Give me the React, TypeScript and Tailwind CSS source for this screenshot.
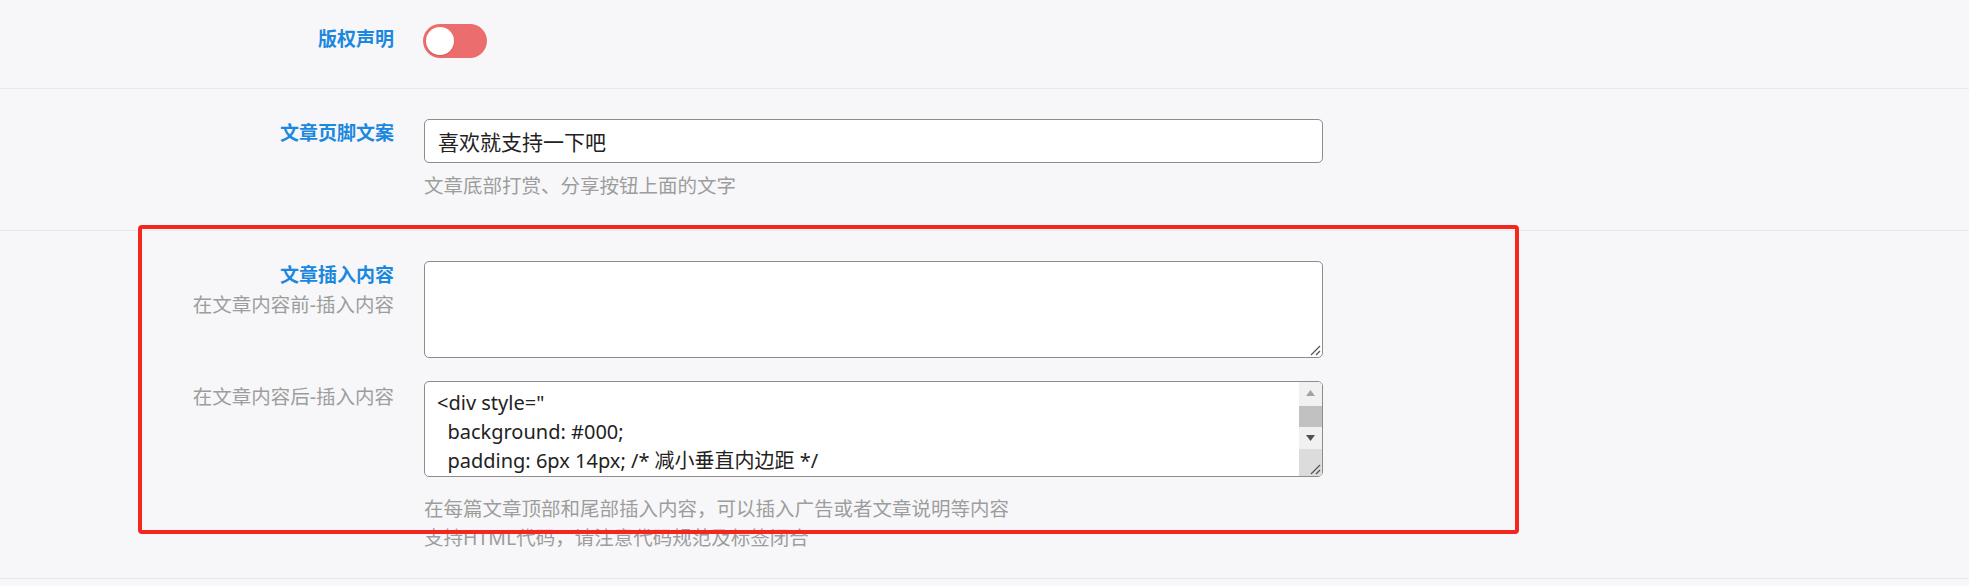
import React, { useState } from 'react';

const font = "font-['Noto_Sans','Noto_Sans_CJK_SC',sans-serif]";

const codeText = `<div style="
  background: #000;
  padding: 6px 14px; /* 减小垂直内边距 */
  border-radius: 6px;
  color: #fff;
">`;

function Grip() {
    return (
        <svg width="12" height="12" viewBox="0 0 12 12" className="block">
            <line x1="11" y1="2" x2="2" y2="11" stroke="#555" strokeWidth="1.3" />
            <line x1="11" y1="7" x2="7" y2="11" stroke="#555" strokeWidth="1.3" />
        </svg>
    );
}

function FakeScrollbar() {
    return (
        <div className="flex flex-col w-[23px] bg-[#f1f1f1]">
            <div className="h-[22px] flex items-center justify-center">
                <svg width="9" height="6" viewBox="0 0 9 6"><path d="M4.5 0 L9 6 L0 6 Z" fill="#a3a3a3" /></svg>
            </div>
            <div className="mt-[2px] h-[21px] bg-[#c1c1c1]"></div>
            <div className="h-[22px] flex items-center justify-center">
                <svg width="9" height="6" viewBox="0 0 9 6"><path d="M0 0 L9 0 L4.5 6 Z" fill="#505050" /></svg>
            </div>
            <div className="h-[27px] bg-[#dcdcdc] flex items-end justify-end pr-[1px] pb-[1px]">
                <Grip />
            </div>
        </div>
    );
}

export default function App() {
    const [footer, setFooter] = useState('喜欢就支持一下吧');
    const [before, setBefore] = useState('');
    const [after, setAfter] = useState(codeText);

    return (
        <div className={`relative min-h-[586px] w-full bg-[#f7f7f9] ${font}`}>
            {/* 版权声明 */}
            <div className="flex h-[89px] border-b border-[#e8e9ec]">
                <div className="w-[394px] pt-[24px] text-right text-[19px] leading-[30px] font-bold text-[#1b88e0]">版权声明</div>
                <div className="ml-[29px] pt-[24px]">
                    <div className="w-[64px] h-[34px] rounded-full bg-[#ec6d6d] p-[3px]">
                        <div className="w-[28px] h-[28px] rounded-full bg-white shadow-[0_1px_2px_rgba(0,0,0,0.15)]"></div>
                    </div>
                </div>
            </div>

            {/* 文章页脚文案 */}
            <div className="flex pt-[30px] pb-[30px] border-b border-[#e8e9ec]">
                <div className="w-[394px] text-right text-[19px] leading-[28px] font-bold text-[#1b88e0]">文章页脚文案</div>
                <div className="ml-[30px] w-[899px]">
                    <input
                        value={footer}
                        onChange={(e) => setFooter(e.target.value)}
                        className="w-full h-[44px] rounded-[5px] border border-[#8d8d8d] bg-white px-[13px] text-[21px] text-[#222] outline-none"
                    />
                    <div className="mt-[9px] text-[19.5px] leading-[28px] text-[#9d9d9d]">文章底部打赏、分享按钮上面的文字</div>
                </div>
            </div>

            {/* 文章插入内容 */}
            <div className="pt-[30px] pb-[26px] border-b border-[#e8e9ec]">
                <div className="flex">
                    <div className="w-[394px] text-right">
                        <div className="text-[19px] leading-[28px] font-bold text-[#1b88e0]">文章插入内容</div>
                        <div className="text-[19.5px] leading-[32px] text-[#9d9d9d]">在文章内容前-插入内容</div>
                    </div>
                    <div className="ml-[30px] w-[899px] relative">
                        <textarea
                            value={before}
                            onChange={(e) => setBefore(e.target.value)}
                            className="block w-full h-[97px] rounded-[5px] border border-[#8d8d8d] bg-white px-[12px] py-[6px] text-[20px] resize-none outline-none"
                        />
                        <div className="absolute right-[2px] bottom-[2px] pointer-events-none"><Grip /></div>
                    </div>
                </div>
                <div className="flex mt-[23px]">
                    <div className="w-[394px] pt-[2px] text-right text-[19.5px] leading-[28px] text-[#9d9d9d]">在文章内容后-插入内容</div>
                    <div className="ml-[30px] w-[899px]">
                        <div className="flex h-[96px] rounded-[5px] border border-[#8d8d8d] bg-white overflow-hidden">
                            <textarea
                                value={after}
                                onChange={(e) => setAfter(e.target.value)}
                                className="flex-1 h-full px-[12px] pt-[6px] text-[20px] leading-[29px] text-[#222] resize-none overflow-hidden outline-none"
                            />
                            <FakeScrollbar />
                        </div>
                        <div className="mt-[17px] text-[19.5px] leading-[29px] text-[#9d9d9d]">
                            <div>在每篇文章顶部和尾部插入内容，可以插入广告或者文章说明等内容</div>
                            <div>支持HTML代码，请注意代码规范及标签闭合</div>
                        </div>
                    </div>
                </div>
            </div>

            {/* red highlight annotation */}
            <div className="absolute left-[138px] top-[225px] w-[1381px] h-[309px] border-[4px] border-[#f5261d] rounded-[4px] pointer-events-none"></div>
        </div>
    );
}
